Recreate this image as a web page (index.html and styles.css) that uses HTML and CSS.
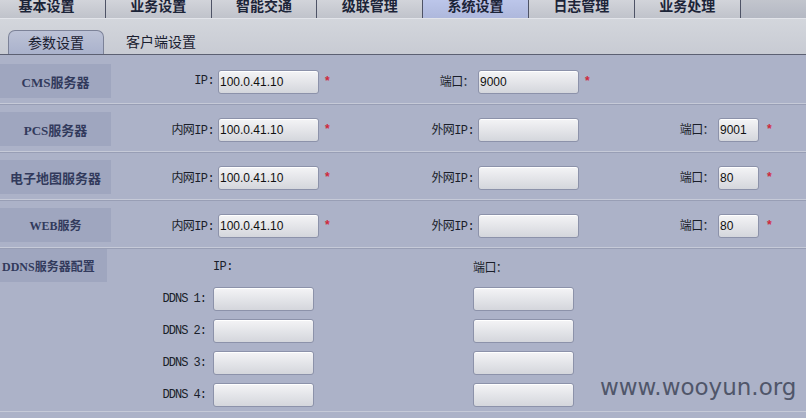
FILE: index.html
```html
<!DOCTYPE html>
<html>
<head>
<meta charset="utf-8">
<link rel="stylesheet" href="styles.css">
</head>
<body>
<div class="topnav">
  <div class="tab first"><span>基本设置</span></div>
  <div class="tab"><span>业务设置</span></div>
  <div class="tab"><span>智能交通</span></div>
  <div class="tab"><span>级联管理</span></div>
  <div class="tab active"><span>系统设置</span></div>
  <div class="tab"><span>日志管理</span></div>
  <div class="tab"><span>业务处理</span></div>
  <div class="tab-fill"></div>
</div>
<div class="subbar">
  <div class="subtab on">参数设置</div>
  <div class="subtab">客户端设置</div>
</div>
<div class="form">
  <div class="row">
    <div class="box">CMS服务器</div>
    <div class="lbl">IP:</div>
    <div class="inp">100.0.41.10</div>
    <div class="star">*</div>
    <div class="lbl">端口：</div>
    <div class="inp">9000</div>
    <div class="star">*</div>
  </div>
  <div class="row">
    <div class="box">PCS服务器</div>
    <div class="lbl">内网IP:</div>
    <div class="inp">100.0.41.10</div>
    <div class="star">*</div>
    <div class="lbl">外网IP:</div>
    <div class="inp"></div>
    <div></div>
    <div class="lbl">端口：</div>
    <div class="inp">9001</div>
    <div class="star s3">*</div>
  </div>
  <div class="row">
    <div class="box">电子地图服务器</div>
    <div class="lbl">内网IP:</div>
    <div class="inp">100.0.41.10</div>
    <div class="star">*</div>
    <div class="lbl">外网IP:</div>
    <div class="inp"></div>
    <div></div>
    <div class="lbl">端口：</div>
    <div class="inp">80</div>
    <div class="star s3">*</div>
  </div>
  <div class="row">
    <div class="box small">WEB服务</div>
    <div class="lbl">内网IP:</div>
    <div class="inp">100.0.41.10</div>
    <div class="star">*</div>
    <div class="lbl">外网IP:</div>
    <div class="inp"></div>
    <div></div>
    <div class="lbl">端口：</div>
    <div class="inp">80</div>
    <div class="star s3">*</div>
  </div>
  <div class="ddns">
    <div class="box dbox">DDNS服务器配置</div>
    <div class="hd">IP:</div>
    <div></div>
    <div class="hd">端口：</div>
    <div class="dl">DDNS 1:</div><div class="inp"></div><div></div><div class="inp"></div>
    <div class="dl">DDNS 2:</div><div class="inp"></div><div></div><div class="inp"></div>
    <div class="dl">DDNS 3:</div><div class="inp"></div><div></div><div class="inp"></div>
    <div class="dl">DDNS 4:</div><div class="inp"></div><div></div><div class="inp"></div>
  </div>
</div>
<div class="watermark">www.wooyun.org</div>
</body>
</html>
```
FILE: styles.css
```css
* { box-sizing: border-box; }
html, body { margin: 0; padding: 0; }
body {
  width: 806px;
  height: 418px;
  overflow: hidden;
  background: #acb2c8;
  position: relative;
  font-family: "Liberation Sans", "Noto Sans CJK SC", sans-serif;
}
.topnav {
  display: flex;
  height: 19px;
  border-bottom: 1px solid #e2e4ea;
  background: linear-gradient(#c2c5cd, #b4b8c3);
}
.tab {
  width: 105.8px;
  flex: none;
  height: 18px;
  overflow: hidden;
  border-right: 1px solid #4e5366;
  background: linear-gradient(#d2d4da, #c0c3cb);
  text-align: center;
  font: bold 14px/14px "Noto Sans CJK SC", sans-serif;
  color: #1c2438;
}
.tab span { display: block; margin-top: -2px; }
.tab.first { padding-right: 12px; }
.tab.active { background: linear-gradient(#bcc6ea, #aeb8dc); }
.tab-fill { flex: 1; }
.subbar {
  height: 36px;
  display: flex;
  align-items: flex-end;
  padding-left: 8px;
  background: linear-gradient(#d3d6dc, #c8cbd3);
  border-bottom: 1px solid #5c6072;
}
.subtab {
  height: 24px;
  font: 14px/23px "Noto Sans CJK SC", sans-serif;
  color: #1a2030;
  text-align: center;
  width: 96px;
}
.subtab.on {
  background: linear-gradient(#bcc2d6, #aab2cc);
  border: 1px solid #7c8298;
  border-bottom: none;
  border-radius: 7px 7px 0 0;
}
.subtab + .subtab { margin-left: 22px; width: auto; text-align: left; }
.form { padding-top: 1px; }
.row {
  height: 48px;
  display: grid;
  grid-template-columns: 111px 107px 101px 24px 135px 101px 24px 115px 41px auto;
  align-items: center;
  border-bottom: 1px solid #c6cad8;
  box-shadow: 0 1px 0 #989eb5;
  padding-top: 2px;
}
.box {
  align-self: start;
  margin-top: 6px;
  height: 34px;
  background: #9fa6bf;
  display: flex;
  align-items: center;
  justify-content: center;
  font: bold 13px "Liberation Serif", "Noto Sans CJK SC", serif;
  color: #323a5c;
}
.box.small { font-size: 12px; }
.lbl {
  text-align: right;
  padding-right: 4px;
  font: 12px "Liberation Mono", "Noto Sans CJK SC", monospace;
  color: #1a1e2a;
  letter-spacing: -0.6px;
}
.inp {
  height: 24px;
  border: 1px solid #8c92aa;
  border-radius: 3px;
  background: linear-gradient(#f4f4f6, #d4d6dc);
  box-shadow: inset 0 1px 0 #ffffff;
  font: 12px/22px "Liberation Sans", sans-serif;
  color: #101010;
  padding-left: 1px;
  margin-top: 2px;
}
.star {
  color: #d0283c;
  font: bold 12px "Liberation Sans", sans-serif;
  padding-left: 6px;
}
.star.s3 { padding-left: 8px; }
.ddns {
  display: grid;
  grid-template-columns: 213px 101px 159px 101px;
  grid-template-rows: 30px repeat(4, 24px);
  row-gap: 8px;
  align-items: center;
  height: 164px;
  border-bottom: 1px solid #c6cad8;
  padding-top: 1px;
}
.dbox {
  width: 107px;
  height: 33px;
  margin-top: 0;
  font-size: 12px;
  justify-content: flex-start;
  padding-left: 2px;
}
.hd {
  font: 12px "Liberation Mono", "Noto Sans CJK SC", monospace;
  color: #1a1e2a;
  letter-spacing: -0.6px;
  margin-top: 6px;
}
.dl {
  text-align: right;
  padding-right: 7px;
  font: 12px "Liberation Mono", monospace;
  color: #1a1e2a;
  letter-spacing: -1px;
}
.ddns .inp { margin-top: 0; }
.watermark {
  position: absolute;
  left: 600px;
  top: 374px;
  font: 23px "DejaVu Sans", sans-serif;
  color: #50566a;
}
```
